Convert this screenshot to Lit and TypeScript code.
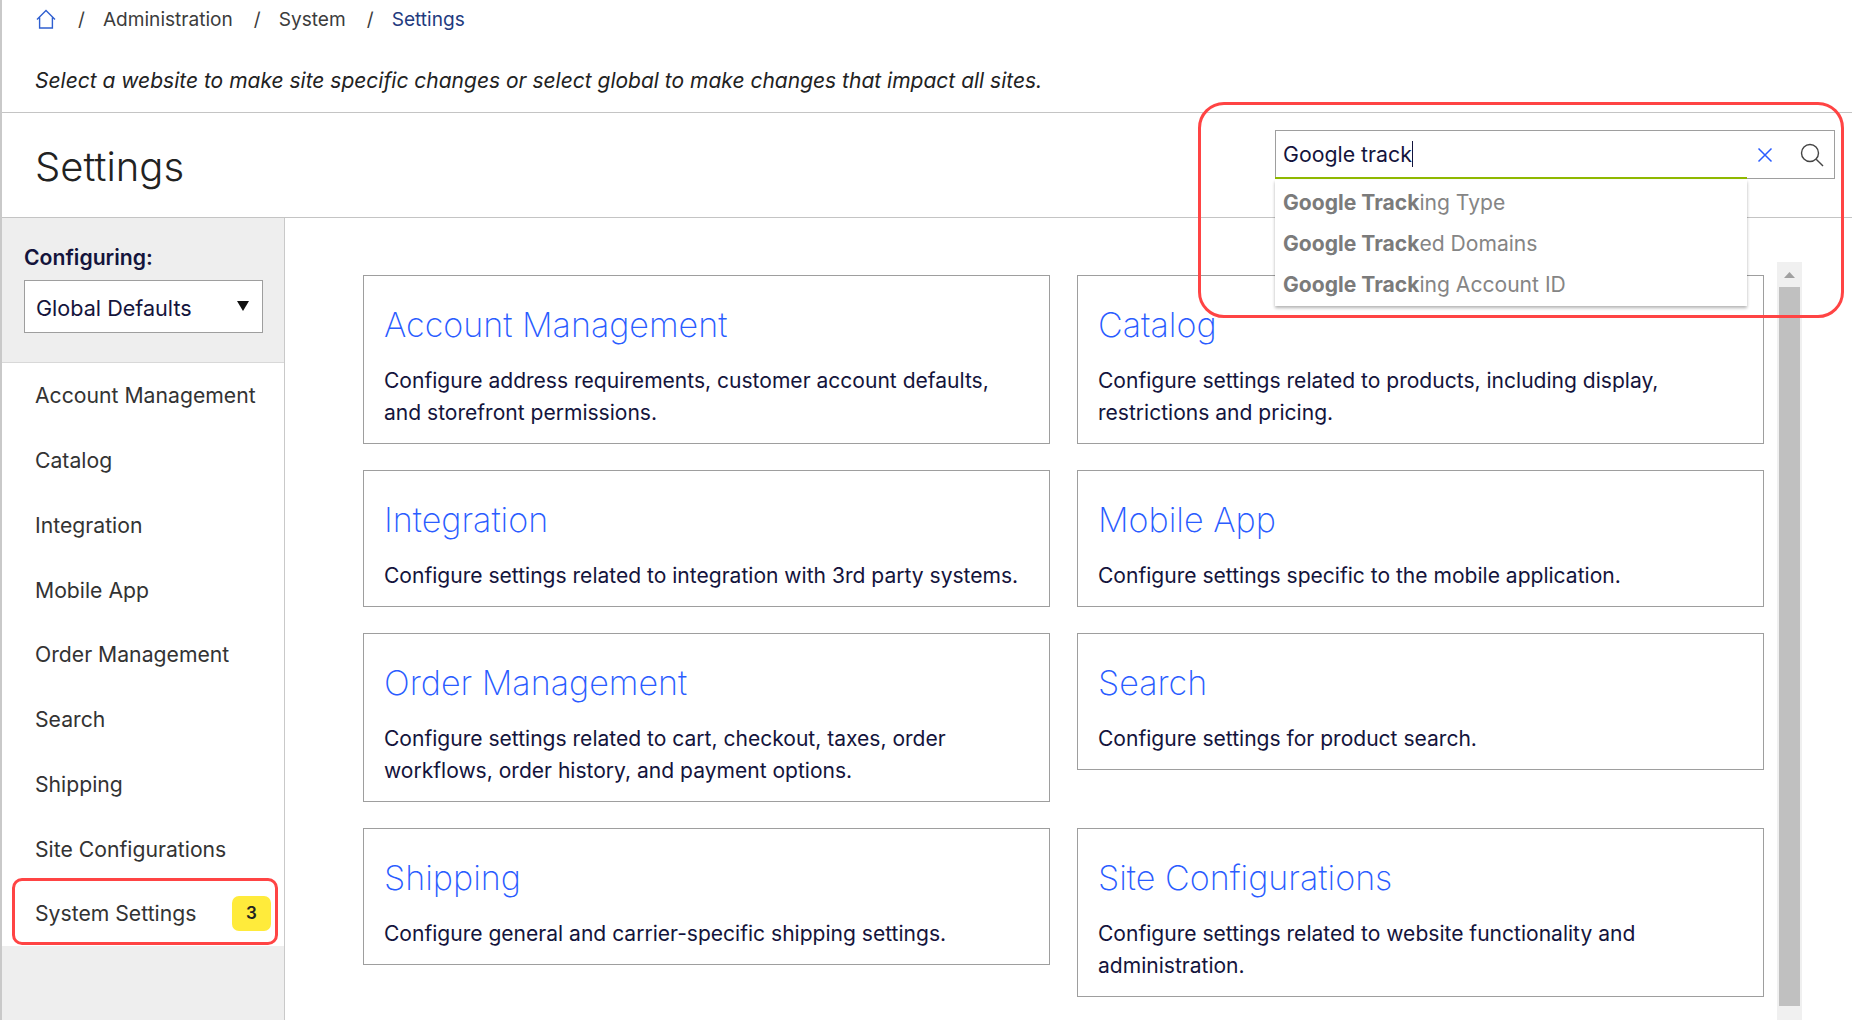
import { LitElement, html, css } from "lit";
import { customElement } from "lit/decorators.js";

const NAV = [
  "Account Management",
  "Catalog",
  "Integration",
  "Mobile App",
  "Order Management",
  "Search",
  "Shipping",
  "Site Configurations",
  "System Settings",
];

const CARDS = [
  ["Account Management", "Configure address requirements, customer account defaults, and storefront permissions."],
  ["Catalog", "Configure settings related to products, including display, restrictions and pricing."],
  ["Integration", "Configure settings related to integration with 3rd party systems."],
  ["Mobile App", "Configure settings specific to the mobile application."],
  ["Order Management", "Configure settings related to cart, checkout, taxes, order workflows, order history, and payment options."],
  ["Search", "Configure settings for product search."],
  ["Shipping", "Configure general and carrier-specific shipping settings."],
  ["Site Configurations", "Configure settings related to website functionality and administration."],
];

const SUGGESTIONS = [
  ["Google Track", "ing Type"],
  ["Google Track", "ed Domains"],
  ["Google Track", "ing Account ID"],
];

@customElement("app-root")
export class AppRoot extends LitElement {
  static styles = css`
    :host {
      display: flex;
      flex-direction: column;
      position: relative;
      height: 1020px;
      overflow: hidden;
      box-sizing: border-box;
      border-left: 2px solid #c9c9c9;
      background: #fff;
      font-family: Inter, "Noto Sans", sans-serif;
      font-size: 21.2px;
      color: #333;
    }

    .intro {
      flex: none;
      height: 113px;
      box-sizing: border-box;
      padding: 0 33px;
      border-bottom: 1px solid #c4c4c4;
    }

    .crumbs {
      display: flex;
      align-items: center;
      height: 38px;
      font-size: 19.1px;
      color: #3c3c3c;
    }

    .crumbs svg {
      width: 22px;
      height: 22px;
      margin-right: 21px;
    }

    .crumbs .sep {
      margin-right: 18px;
    }

    .crumbs .item {
      margin-right: 21px;
    }

    .crumbs .current {
      color: #1f3b7f;
    }

    .note {
      margin-top: 27px;
      font-style: italic;
      font-size: 21px;
      line-height: 32px;
      color: #222;
    }

    .title-row {
      flex: none;
      height: 105px;
      box-sizing: border-box;
      display: flex;
      justify-content: space-between;
      align-items: flex-start;
      padding: 17px 17px 0 33px;
      border-bottom: 1px solid #c4c4c4;
    }

    h1 {
      margin: 12px 0 0;
      font-size: 40px;
      line-height: 50px;
      font-weight: 300;
      color: #222;
    }

    .search {
      position: relative;
      z-index: 2;
      width: 560px;
      height: 49px;
      box-sizing: border-box;
      display: flex;
      align-items: center;
      padding-left: 7px;
      border: 1px solid #9e9e9e;
      color: #14143c;
    }

    .search .query {
      flex: 1;
      display: flex;
      align-items: center;
      white-space: pre;
      font-size: 21.3px;
      margin-top: -1px;
    }

    .caret {
      width: 1px;
      height: 26px;
      background: #14143c;
    }

    .search .clear {
      width: 18px;
      height: 18px;
      margin-right: 25px;
    }

    .search .glass {
      width: 26px;
      height: 26px;
      margin-right: 9px;
    }

    .green {
      position: absolute;
      left: -1px;
      bottom: -1px;
      width: 472px;
      height: 2px;
      background: #8fb800;
    }

    .menu {
      position: absolute;
      left: -1px;
      top: 49px;
      width: 472px;
      height: 126px;
      background: #fff;
      box-shadow: 0 2px 3px rgba(0, 0, 0, 0.3);
      display: flex;
      flex-direction: column;
      justify-content: center;
    }

    .menu div {
      height: 41px;
      line-height: 41px;
      padding-left: 8px;
      font-size: 21.1px;
      color: #858585;
    }

    .menu b {
      font-weight: 700;
      color: #7b7b7b;
    }

    .main {
      flex: 1;
      min-height: 0;
      display: flex;
    }

    .side {
      flex: none;
      width: 283px;
      box-sizing: border-box;
      background: #eeeeee;
      border-right: 1.5px solid #c9c9c9;
    }

    .config {
      height: 145px;
      box-sizing: border-box;
      padding: 24px 21px 0 22px;
      border-bottom: 1px solid #d8d8d8;
    }

    .config label {
      display: block;
      font-weight: 600;
      line-height: 30px;
      color: #14143c;
      margin-bottom: 8px;
    }

    .select {
      height: 53px;
      box-sizing: border-box;
      display: flex;
      align-items: center;
      justify-content: space-between;
      padding: 3px 13px 0 11px;
      background: #fff;
      border: 1px solid #9e9e9e;
      font-size: 21.6px;
      color: #14143c;
    }

    .select svg {
      width: 12px;
      height: 10px;
      margin-top: -4px;
    }

    nav {
      background: #fff;
    }

    nav a {
      height: 64.75px;
      display: flex;
      align-items: center;
      justify-content: space-between;
      padding: 0 13px 0 33px;
      box-sizing: border-box;
    }

    .badge {
      width: 39px;
      height: 35px;
      border-radius: 7px;
      background: #ffeb3b;
      display: flex;
      align-items: center;
      justify-content: center;
      font-size: 17px;
      font-weight: 600;
      color: #222;
    }

    .content {
      flex: 1;
      min-width: 0;
      display: flex;
      align-items: stretch;
      padding: 57px 0 0 78px;
    }

    .grid {
      display: grid;
      grid-template-columns: 687px 687px;
      gap: 26px 27px;
      align-items: start;
      align-content: start;
    }

    .card {
      border: 1px solid #9e9e9e;
      padding: 27px 20px 14px;
    }

    .card h2 {
      margin: 0 0 18px;
      font-size: 34.1px;
      line-height: 44px;
      font-weight: 200;
      color: #2a5cff;
    }

    .card p {
      margin: 0;
      font-size: 21.05px;
      line-height: 32px;
      color: #14143c;
    }

    .scroll {
      flex: none;
      width: 25px;
      margin: -13px 0 0 13px;
      box-sizing: border-box;
      padding: 0 2px 14px;
      background: #f0f0f0;
      display: flex;
      flex-direction: column;
    }

    .scroll svg {
      flex: none;
      display: block;
      width: 21px;
      height: 25px;
    }

    .scroll i {
      flex: 1;
      background: #c0c0c0;
    }

    .mark {
      position: absolute;
      z-index: 3;
      box-sizing: border-box;
      border: 3px solid #ff4444;
      pointer-events: none;
    }

    .mark.search-mark {
      left: 1196px;
      top: 102px;
      width: 646px;
      height: 216px;
      border-radius: 26px;
    }

    .mark.nav-mark {
      left: 10px;
      top: 878px;
      width: 266px;
      height: 67px;
      border-radius: 10px;
    }
  `;

  render() {
    return html`
      <header class="intro">
        <div class="crumbs">
          <svg viewBox="0 0 22 22" fill="none" stroke="#2f5fd0" stroke-width="1.4">
            <path d="M2 11.5 11 2.5l9 9M4.6 9.5V20h12.8V9.5" />
          </svg>
          <span class="sep">/</span>
          <span class="item">Administration</span>
          <span class="sep">/</span>
          <span class="item">System</span>
          <span class="sep">/</span>
          <span class="current">Settings</span>
        </div>
        <div class="note">
          Select a website to make site specific changes or select global to make changes that impact all sites.
        </div>
      </header>

      <div class="title-row">
        <h1>Settings</h1>
        <div class="search">
          <div class="query">Google track<span class="caret"></span></div>
          <svg class="clear" viewBox="0 0 18 18" stroke="#2a5cff" stroke-width="1.5">
            <path d="M2.5 2.5l13 13M15.5 2.5l-13 13" />
          </svg>
          <svg class="glass" viewBox="0 0 26 26" fill="none" stroke="#444" stroke-width="1.4">
            <circle cx="11" cy="11" r="8.5" />
            <path d="M17.2 17.2 24 24" />
          </svg>
          <span class="green"></span>
          <div class="menu">
            ${SUGGESTIONS.map(([hit, rest]) => html`<div><b>${hit}</b>${rest}</div>`)}
          </div>
        </div>
      </div>

      <div class="main">
        <aside class="side">
          <div class="config">
            <label>Configuring:</label>
            <div class="select">
              Global Defaults
              <svg viewBox="0 0 12 10"><path d="M0 0h12L6 10z" fill="#111" /></svg>
            </div>
          </div>
          <nav>
            ${NAV.map(
              (name) => html`<a>${name}${name === "System Settings"
                ? html`<span class="badge">3</span>`
                : ""}</a>`
            )}
          </nav>
        </aside>

        <section class="content">
          <div class="grid">
            ${CARDS.map(
              ([title, text]) => html`
                <article class="card">
                  <h2>${title}</h2>
                  <p>${text}</p>
                </article>
              `
            )}
          </div>
          <div class="scroll">
            <svg viewBox="0 0 21 25"><path d="M5 16 10.5 10 16 16z" fill="#a0a0a0" /></svg>
            <i></i>
          </div>
        </section>
      </div>

      <div class="mark search-mark"></div>
      <div class="mark nav-mark"></div>
    `;
  }
}
